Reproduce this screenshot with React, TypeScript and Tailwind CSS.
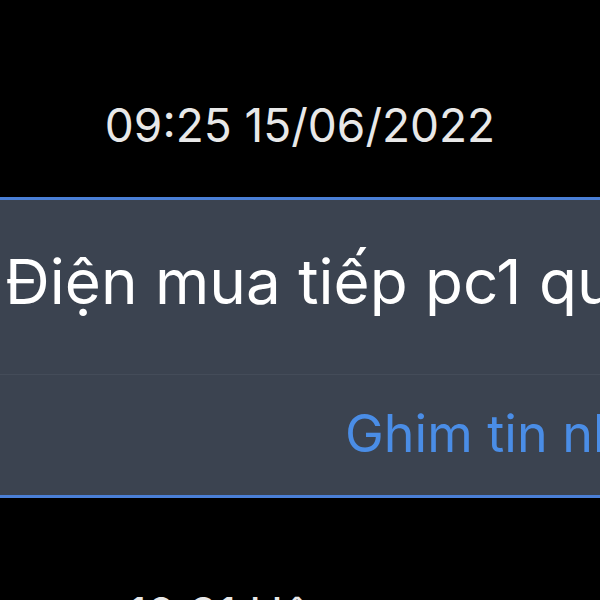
export default function App() {
  return (
    <div className="w-[600px] h-[600px] overflow-hidden bg-black font-['Inter','Noto_Sans',sans-serif]">
      {/* Timestamp */}
      <div className="mt-[102px] text-center text-[46px] leading-none text-[#e8e8e8] whitespace-nowrap">
        09:25 15/06/2022
      </div>

      {/* Pinned message card */}
      <div className="mt-[49px] w-[600px] border-y-[3px] border-[#4a7fd6] bg-[#3b4350]">
        <div className="h-[174px] pt-[51px] pl-[5px] overflow-hidden whitespace-nowrap text-[62px] leading-none text-white">
          Điện mua tiếp pc1 quý 3 nhé
        </div>
        <div className="h-px bg-[#444c59]" />
        <div className="h-[120px] pt-[33px] pl-[345px] overflow-hidden whitespace-nowrap text-[52px] leading-none text-[#4a8de6]">
          Ghim tin nhắn
        </div>
      </div>

      {/* Next timestamp (cut off) */}
      <div className="mt-[93px] pl-[128px] text-[46px] leading-none text-[#e8e8e8] whitespace-nowrap">
        10:31 Hôm nay
      </div>
    </div>
  );
}
